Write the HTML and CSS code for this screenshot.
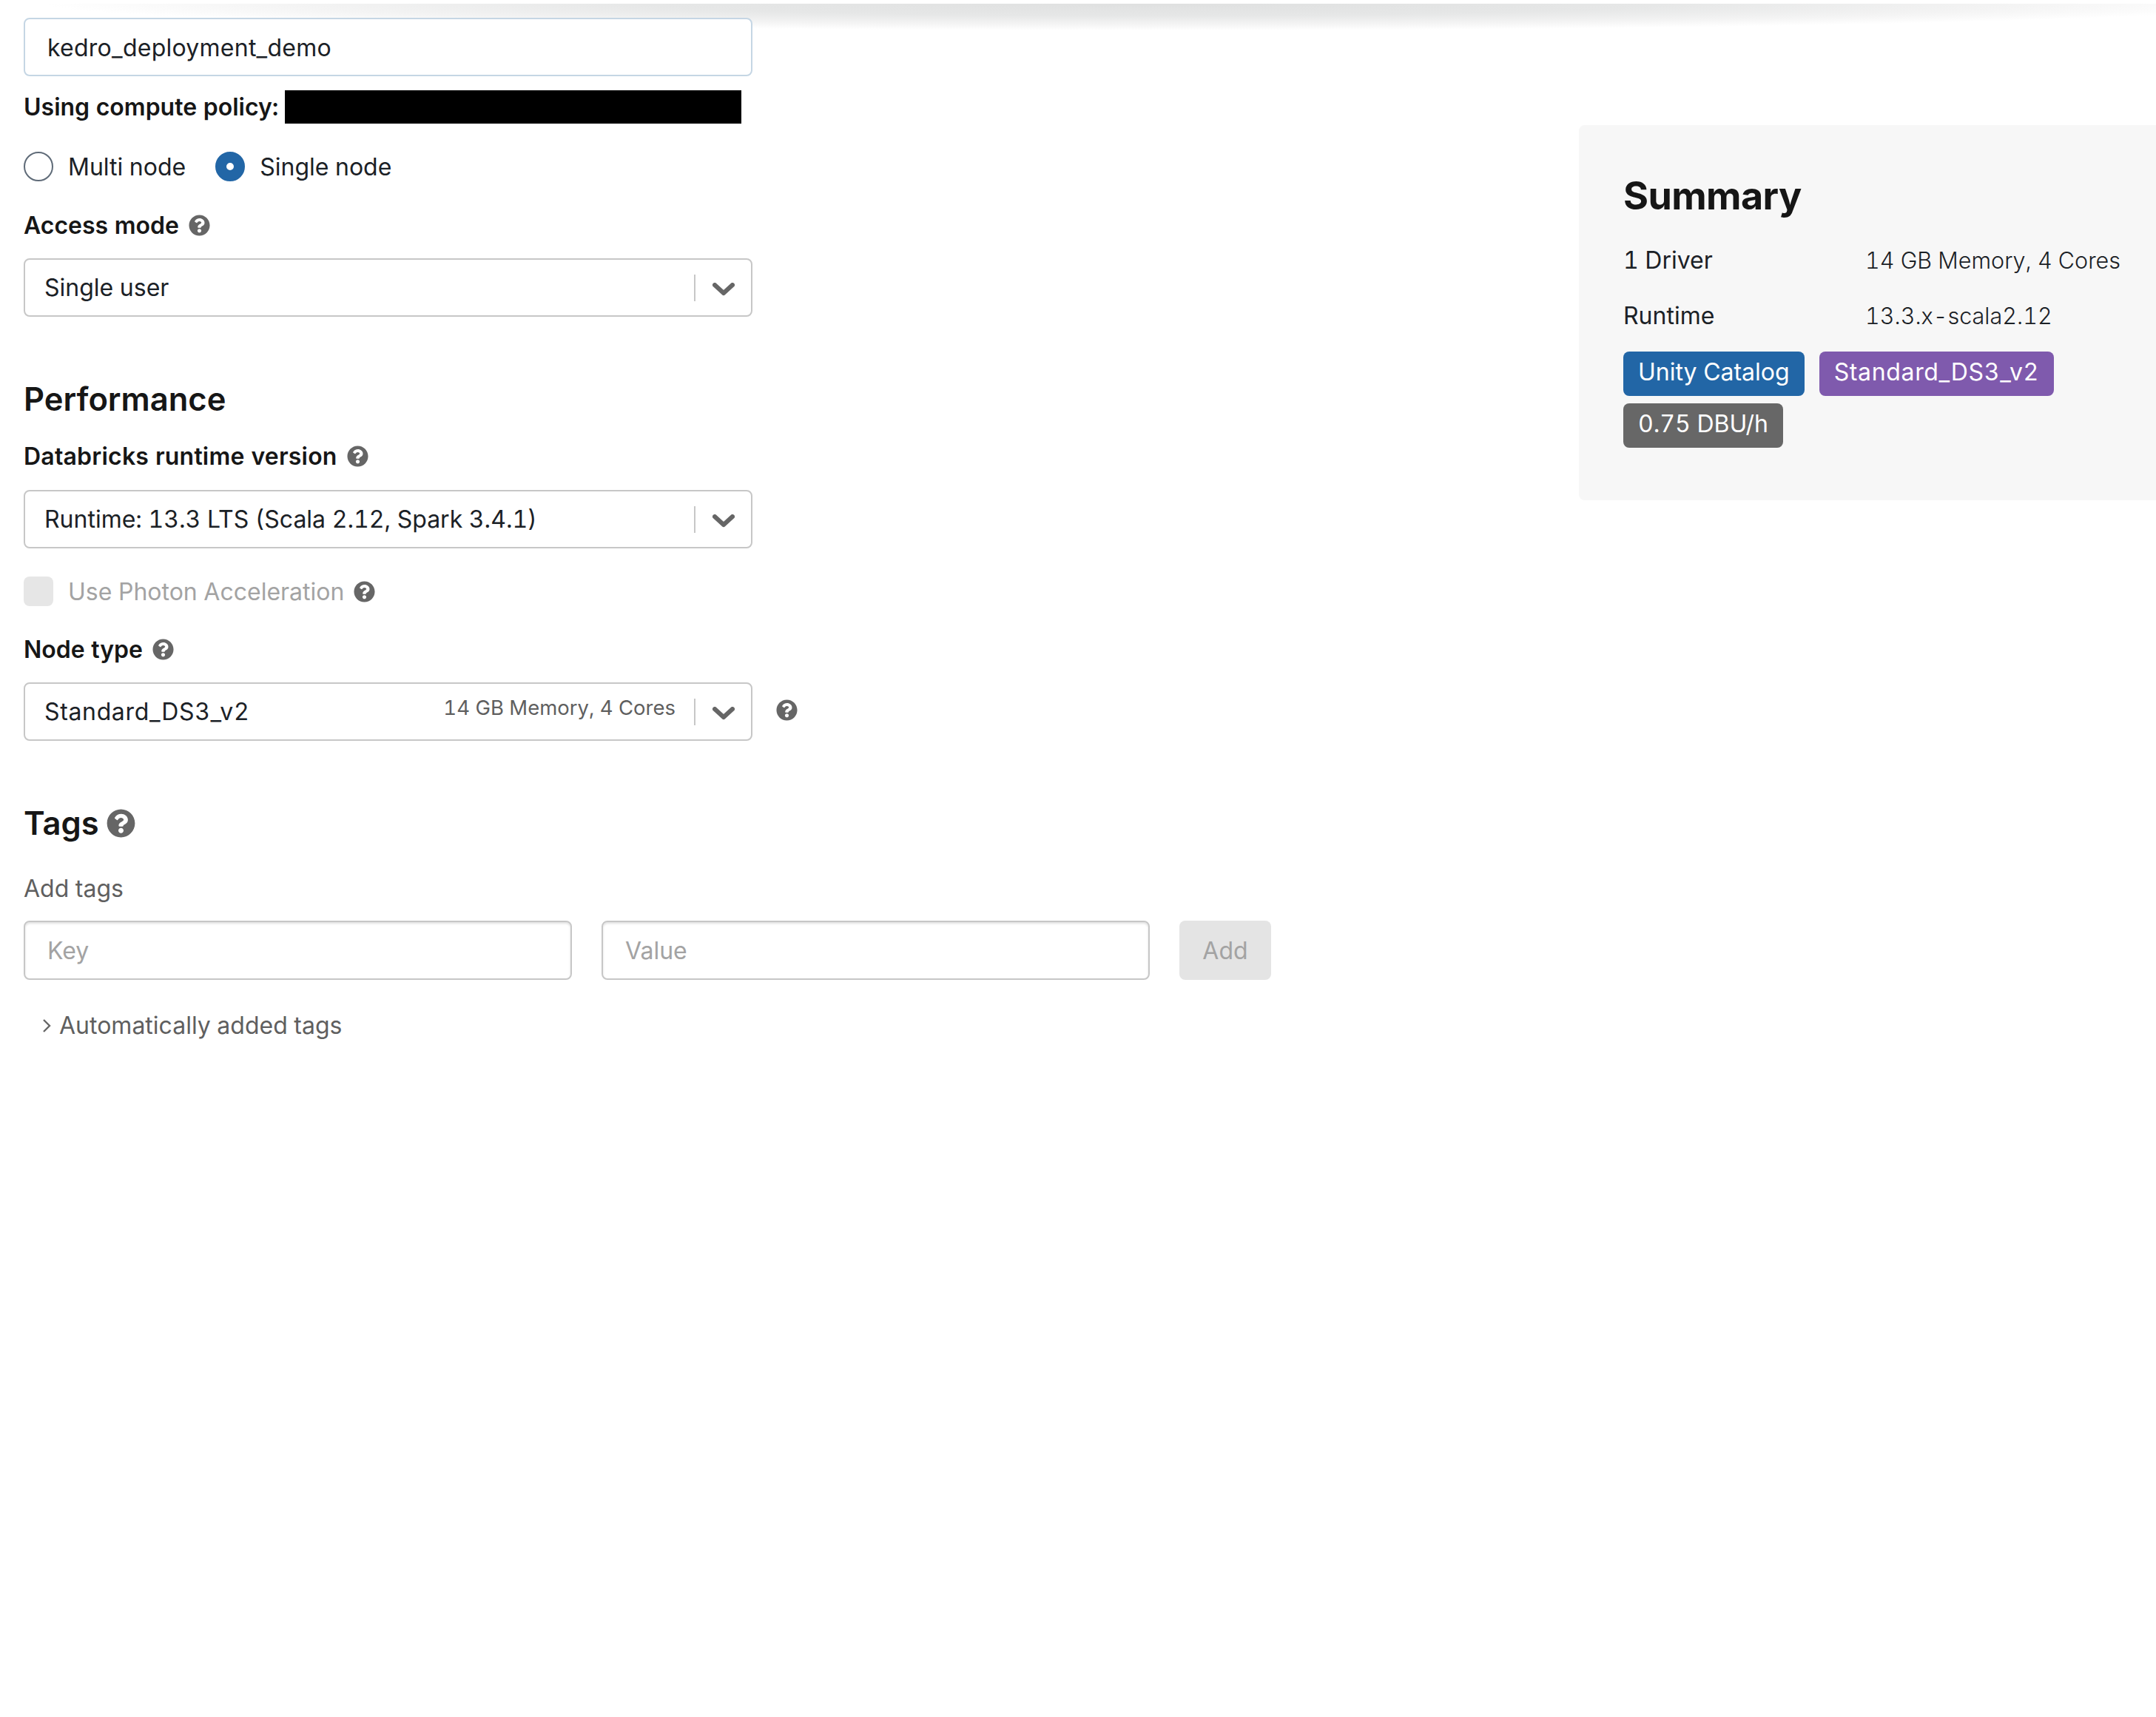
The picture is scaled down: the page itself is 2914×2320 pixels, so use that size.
FILE: index.html
```html
<!DOCTYPE html>
<html lang="en">
    <head>
        <title>Create compute</title>
        <link rel="stylesheet" href="styles.css">
    </head>
    <body>
        <svg class="defs" width="0" height="0">
            <symbol id="help" viewBox="0 0 512 512">
                <path d="M504 256c0 136.997-111.043 248-248 248S8 392.997 8 256C8 119.083 119.043 8 256 8s248 111.083 248 248zM262.655 90c-54.497 0-89.255 22.957-116.549 63.758-3.536 5.286-2.353 12.415 2.715 16.258l34.699 26.31c5.205 3.947 12.621 3.008 16.665-2.122 17.864-22.658 30.113-35.797 57.303-35.797 20.429 0 45.698 13.148 45.698 32.958 0 14.976-12.363 22.667-32.534 33.976C247.128 238.528 216 254.941 216 296v4c0 6.627 5.373 12 12 12h56c6.627 0 12-5.373 12-12v-1.333c0-28.462 83.186-29.647 83.186-106.667 0-58.002-60.165-102-116.531-102zM256 338c-25.365 0-46 20.635-46 46 0 25.364 20.635 46 46 46s46-20.636 46-46c0-25.365-20.635-46-46-46z"/>
            </symbol>
            <symbol id="chevron" viewBox="0 0 30 18">
                <polyline points="3,3 15,14 27,3"/>
            </symbol>
        </svg>
        <div class="top-shadow"></div>
        <main class="page">
            <section class="form">
                <input class="text-input name-input" type="text" value="kedro_deployment_demo">

                <div class="policy">
                    <span class="label">Using compute policy:</span>
                    <span class="redacted"></span>
                </div>

                <div class="radios">
                    <span class="radio"></span>
                    <span class="option multi-option">Multi node</span>
                    <span class="radio radio-on"></span>
                    <span class="option">Single node</span>
                </div>

                <div class="label-row access-label">
                    <span class="label">Access mode</span>
                    <svg class="help"><use href="#help"/></svg>
                </div>
                <div class="select access-select">
                    <span class="select-value">Single user</span>
                    <span class="select-sep"></span>
                    <svg class="chevron"><use href="#chevron"/></svg>
                </div>

                <h2 class="section-title performance">Performance</h2>
                <div class="label-row runtime-label">
                    <span class="label">Databricks runtime version</span>
                    <svg class="help"><use href="#help"/></svg>
                </div>
                <div class="select runtime-select">
                    <span class="select-value">Runtime: 13.3 LTS (Scala 2.12, Spark 3.4.1)</span>
                    <span class="select-sep"></span>
                    <svg class="chevron"><use href="#chevron"/></svg>
                </div>

                <div class="photon">
                    <span class="checkbox"></span>
                    <span class="option option-off">Use Photon Acceleration</span>
                    <svg class="help"><use href="#help"/></svg>
                </div>

                <div class="label-row node-label">
                    <span class="label">Node type</span>
                    <svg class="help"><use href="#help"/></svg>
                </div>
                <div class="node-row">
                    <div class="select">
                        <span class="select-value wide">Standard_DS3_v2</span>
                        <span class="select-note">14 GB Memory, 4 Cores</span>
                        <span class="select-sep"></span>
                        <svg class="chevron"><use href="#chevron"/></svg>
                    </div>
                    <svg class="help"><use href="#help"/></svg>
                </div>

                <h2 class="section-title tags">Tags<svg class="help help-large"><use href="#help"/></svg></h2>
                <div class="add-tags">Add tags</div>
                <div class="tag-row">
                    <input class="text-input tag-input" type="text" placeholder="Key">
                    <input class="text-input tag-input" type="text" placeholder="Value">
                    <button class="add-btn" disabled>Add</button>
                </div>
                <div class="auto-tags">
                    <svg class="caret" viewBox="0 0 12 20"><polyline points="2,2 10,10 2,18"/></svg>
                    Automatically added tags
                </div>
            </section>

            <aside class="summary">
                <h2 class="summary-title">Summary</h2>
                <div class="summary-row">
                    <span class="summary-key">1 Driver</span>
                    <span class="summary-val">14 GB Memory, 4 Cores</span>
                </div>
                <div class="summary-row">
                    <span class="summary-key">Runtime</span>
                    <span class="summary-val">13.3.x-scala2.12</span>
                </div>
                <div class="badges">
                    <span class="badge badge-blue">Unity Catalog</span>
                    <span class="badge badge-purple wide">Standard_DS3_v2</span>
                    <span class="badge badge-grey">0.75 DBU/h</span>
                </div>
            </aside>
        </main>
    </body>
</html>
```

FILE: styles.css
```css
:root {
    --text-color: #1b2126;
    --heading-color: #161616;
    --muted: #5f5f5f;
    --icon-color: #666666;
    --border-color: #c7c7c7;
    --blue: #2266a6;
    --purple: #7f5aad;
}

* {
    box-sizing: border-box;
}

html, body {
    margin: 0;
    height: 100%;
    background-color: white;
    overflow: hidden;
}

body {
    font-family: Inter, "Liberation Sans", sans-serif;
    font-size: 32px;
    font-variant-numeric: tabular-nums;
    color: var(--text-color);
}

.defs {
    display: block;
    height: 0;
}

.wide {
    letter-spacing: 0.65px;
}

.top-shadow {
    position: absolute;
    top: 5px;
    left: 0;
    width: 100%;
    height: 40px;
    background: radial-gradient(ellipse 1500px 36px at 1560px 0, #dfe0e0 0%, #e6e7e7 45%, #f4f4f4 78%, rgba(255, 255, 255, 0) 100%);
}

.page {
    position: relative;
    display: grid;
    grid-template-columns: 2134px 1fr;
}

.form {
    padding: 24px 0 0 32px;
}

.text-input {
    display: block;
    width: 985px;
    height: 79px;
    padding: 0 30px;
    font-family: inherit;
    font-size: 32px;
    color: var(--text-color);
    background: white;
    border: 2px solid var(--border-color);
    border-radius: 8px;
    outline: none;
}

.name-input {
    padding-top: 2px;
    letter-spacing: 0.25px;
    border-color: #c5d6e4;
}

.label {
    font-weight: 600;
    color: var(--heading-color);
}

.policy {
    display: flex;
    align-items: center;
    height: 45px;
    margin-top: 19px;
}

.redacted {
    width: 617px;
    height: 45px;
    margin-left: 9px;
    background: black;
}

.radios {
    display: flex;
    align-items: center;
    height: 40px;
    margin-top: 38px;
}

.radio {
    width: 40px;
    height: 40px;
    border: 2px solid #5f6b78;
    border-radius: 50%;
    background: white;
}

.radio-on {
    border: 15px solid var(--blue);
}

.option {
    margin-left: 20px;
}

.multi-option {
    margin-right: 40px;
}

.option-off {
    color: #a3a3a3;
}

.label-row {
    display: flex;
    align-items: center;
    height: 40px;
}

.help {
    display: block;
    width: 29px;
    height: 29px;
    margin-left: 13px;
    fill: var(--icon-color);
}

.access-label {
    margin-top: 39px;
}

.access-select {
    margin-top: 25px;
}

.select {
    display: flex;
    align-items: center;
    width: 985px;
    height: 79px;
    padding: 0 22px 0 26px;
    background: white;
    border: 2px solid var(--border-color);
    border-radius: 8px;
}

.select-value {
    flex: 1;
}

.select-note {
    margin: -11px 25px 0 0;
    font-size: 27.5px;
    color: var(--muted);
}

.select-sep {
    width: 2px;
    height: 36px;
    background: var(--border-color);
}

.chevron {
    display: block;
    width: 30px;
    height: 18px;
    margin: 4px 0 0 23px;
    fill: none;
    stroke: var(--icon-color);
    stroke-width: 6;
    stroke-linecap: round;
    stroke-linejoin: round;
}

.section-title {
    display: flex;
    align-items: center;
    height: 60px;
    margin: 81px 0 0;
    font-size: 43.5px;
    font-weight: 600;
    color: var(--heading-color);
}

.runtime-label {
    margin-top: 27px;
}

.runtime-label .label {
    letter-spacing: 0.2px;
}

.runtime-select {
    margin-top: 26px;
}

.photon {
    display: flex;
    align-items: center;
    height: 40px;
    margin-top: 38px;
}

.checkbox {
    width: 40px;
    height: 40px;
    background: #e6e6e6;
    border-radius: 8px;
}

.node-label {
    margin-top: 38px;
}

.node-row {
    display: flex;
    align-items: center;
    margin-top: 25px;
}

.node-row .help {
    margin-left: 32px;
    margin-top: -5px;
}

.help-large {
    width: 39px;
    height: 39px;
    margin-left: 10px;
}

.add-tags {
    height: 40px;
    margin-top: 39px;
    line-height: 40px;
    color: var(--muted);
}

.tag-row {
    display: flex;
    gap: 40px;
    margin-top: 23px;
}

.tag-input {
    width: 741px;
    height: 80px;
    box-shadow: inset 0 2px 3px rgba(0, 0, 0, 0.12);
}

.tag-input::placeholder {
    color: #a3a3a3;
    opacity: 1;
}

.add-btn {
    width: 124px;
    height: 80px;
    padding: 0;
    font-family: inherit;
    font-size: 32px;
    color: #a3a3a3;
    background: #e4e4e4;
    border: none;
    border-radius: 8px;
}

.auto-tags {
    display: flex;
    align-items: center;
    height: 40px;
    margin-top: 41px;
    padding-left: 25px;
    color: var(--muted);
}

.caret {
    width: 12px;
    height: 20px;
    margin: 2px 11px 0 0;
    fill: none;
    stroke: var(--icon-color);
    stroke-width: 2.4;
}

.summary {
    height: 507px;
    margin-top: 169px;
    padding: 60px 0 0 60px;
    background: #f7f7f7;
    border-radius: 8px 0 0 8px;
}

.summary-title {
    margin: 0;
    height: 72px;
    line-height: 72px;
    font-size: 52px;
    font-weight: 700;
    letter-spacing: -0.6px;
    color: var(--heading-color);
}

.summary-row {
    display: flex;
    height: 40px;
    line-height: 40px;
    margin-bottom: 35px;
}

.summary-title + .summary-row {
    margin-top: 31px;
}

.summary-key {
    width: 327px;
}

.summary-val {
    font-size: 30.5px;
    font-weight: 300;
}

.badges {
    display: flex;
    flex-wrap: wrap;
    gap: 10px 20px;
    margin-top: -7px;
}

.badge {
    height: 60px;
    padding: 0 20px;
    line-height: 56px;
    color: white;
    border-radius: 8px;
}

.badge-blue {
    background: var(--blue);
}

.badge-purple {
    background: var(--purple);
}

.badge-grey {
    background: #676767;
}
```
